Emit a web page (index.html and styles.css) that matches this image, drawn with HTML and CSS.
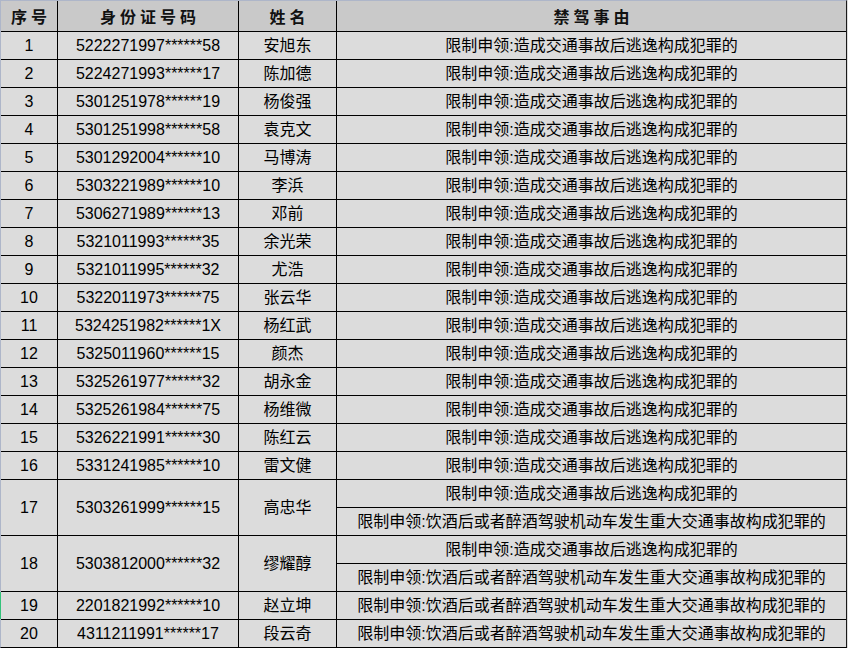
FILE: index.html
```html
<!DOCTYPE html>
<html lang="zh-CN">
<head>
<meta charset="utf-8">
<title>禁驾名单</title>
<link rel="stylesheet" href="styles.css">
</head>
<body>
<div class="sheet">
  <div class="hd">序号</div><div class="hd">身份证号码</div><div class="hd">姓名</div><div class="hd">禁驾事由</div>

  <div class="c">1</div><div class="c">5222271997******58</div><div class="c">安旭东</div><div class="c">限制申领:造成交通事故后逃逸构成犯罪的</div>
  <div class="c">2</div><div class="c">5224271993******17</div><div class="c">陈加德</div><div class="c">限制申领:造成交通事故后逃逸构成犯罪的</div>
  <div class="c">3</div><div class="c">5301251978******19</div><div class="c">杨俊强</div><div class="c">限制申领:造成交通事故后逃逸构成犯罪的</div>
  <div class="c">4</div><div class="c">5301251998******58</div><div class="c">袁克文</div><div class="c">限制申领:造成交通事故后逃逸构成犯罪的</div>
  <div class="c">5</div><div class="c">5301292004******10</div><div class="c">马博涛</div><div class="c">限制申领:造成交通事故后逃逸构成犯罪的</div>
  <div class="c">6</div><div class="c">5303221989******10</div><div class="c">李浜</div><div class="c">限制申领:造成交通事故后逃逸构成犯罪的</div>
  <div class="c">7</div><div class="c">5306271989******13</div><div class="c">邓前</div><div class="c">限制申领:造成交通事故后逃逸构成犯罪的</div>
  <div class="c">8</div><div class="c">5321011993******35</div><div class="c">余光荣</div><div class="c">限制申领:造成交通事故后逃逸构成犯罪的</div>
  <div class="c">9</div><div class="c">5321011995******32</div><div class="c">尤浩</div><div class="c">限制申领:造成交通事故后逃逸构成犯罪的</div>
  <div class="c">10</div><div class="c">5322011973******75</div><div class="c">张云华</div><div class="c">限制申领:造成交通事故后逃逸构成犯罪的</div>
  <div class="c">11</div><div class="c">5324251982******1X</div><div class="c">杨红武</div><div class="c">限制申领:造成交通事故后逃逸构成犯罪的</div>
  <div class="c">12</div><div class="c">5325011960******15</div><div class="c">颜杰</div><div class="c">限制申领:造成交通事故后逃逸构成犯罪的</div>
  <div class="c">13</div><div class="c">5325261977******32</div><div class="c">胡永金</div><div class="c">限制申领:造成交通事故后逃逸构成犯罪的</div>
  <div class="c">14</div><div class="c">5325261984******75</div><div class="c">杨维微</div><div class="c">限制申领:造成交通事故后逃逸构成犯罪的</div>
  <div class="c">15</div><div class="c">5326221991******30</div><div class="c">陈红云</div><div class="c">限制申领:造成交通事故后逃逸构成犯罪的</div>
  <div class="c">16</div><div class="c">5331241985******10</div><div class="c">雷文健</div><div class="c">限制申领:造成交通事故后逃逸构成犯罪的</div>

  <div class="c span2">17</div><div class="c span2">5303261999******15</div><div class="c span2">高忠华</div><div class="c">限制申领:造成交通事故后逃逸构成犯罪的</div>
  <div class="c">限制申领:饮酒后或者醉酒驾驶机动车发生重大交通事故构成犯罪的</div>

  <div class="c span2">18</div><div class="c span2">5303812000******32</div><div class="c span2">缪耀醇</div><div class="c">限制申领:造成交通事故后逃逸构成犯罪的</div>
  <div class="c">限制申领:饮酒后或者醉酒驾驶机动车发生重大交通事故构成犯罪的</div>

  <div class="c mark">19</div><div class="c">2201821992******10</div><div class="c">赵立坤</div><div class="c">限制申领:饮酒后或者醉酒驾驶机动车发生重大交通事故构成犯罪的</div>
  <div class="c">20</div><div class="c">4311211991******17</div><div class="c">段云奇</div><div class="c">限制申领:饮酒后或者醉酒驾驶机动车发生重大交通事故构成犯罪的</div>
</div>
</body>
</html>
```
FILE: styles.css
```css
html, body {
  margin: 0;
  padding: 0;
  background: #dcdcdc;
}

.sheet {
  display: grid;
  grid-template-columns: 56px 180px 97px 509px;
  grid-template-rows: 30px;
  grid-auto-rows: 27px;
  gap: 1px;
  width: max-content;
  background: #000;
  border-left: 1px solid #aeb6c9;
  border-top: 1px solid #aeb6c9;
  border-right: 1px solid #1a1a1a;
  border-bottom: 1px solid #000;
  font-family: "Liberation Sans", "Noto Sans CJK SC", sans-serif;
  font-size: 16px;
  color: #000;
}

.hd {
  background: #c9c9c9;
  display: flex;
  align-items: center;
  justify-content: center;
  font-family: "Noto Sans CJK SC", sans-serif;
  font-weight: 700;
  font-size: 16px;
  letter-spacing: 4px;
  padding-left: 4px;
  color: #111;
}

.c {
  background: #dcdcdc;
  display: flex;
  align-items: center;
  justify-content: center;
  white-space: nowrap;
  line-height: 1;
}

.span2 {
  grid-row: span 2;
}

.mark {
  position: relative;
}

.mark::before {
  content: "";
  position: absolute;
  left: -1px;
  top: 0;
  width: 1px;
  height: 100%;
  background: #33c27a;
}
```
